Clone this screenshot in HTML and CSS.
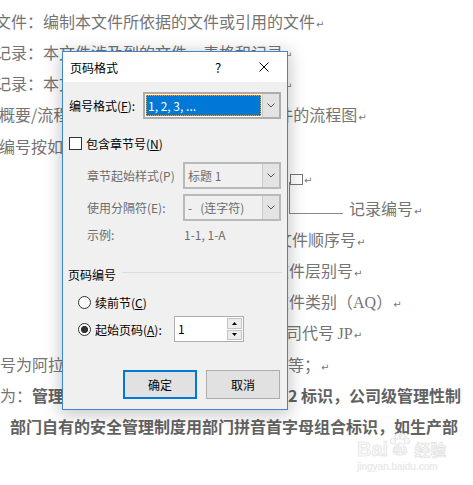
FILE: index.html
```html
<!DOCTYPE html>
<html lang="zh-CN">
<head>
<meta charset="utf-8">
<title>页码格式</title>
<link rel="stylesheet" href="styles.css">
</head>
<body>
<div class="doc">
  <div class="ln s-5">文件：编制本文件所依据的文件或引用的文件<span class="pm">↵</span></div>
  <div class="ln s-5">记录：本文件涉及到的文件、表格和记录<span class="pm">↵</span></div>
  <div class="ln s-5">记录：本文件涉及到的记录、表格和表单<span class="pm">↵</span></div>
  <div class="ln s-1">概要/流程：本文件所描述的各项管理文件的流程图<span class="pm">↵</span></div>
  <div class="ln s-1">编号按如下规定：<span class="pm">↵</span></div>
  <div class="ln i290"><span class="box"></span><span class="pm">↵</span></div>
  <div class="ln i289 diag"><span class="brk"></span><span class="dtx">记录编号<span class="pm">↵</span></span></div>
  <div class="ln i276">文件顺序号<span class="pm">↵</span></div>
  <div class="ln i273">文件层别号<span class="pm">↵</span></div>
  <div class="ln i273">文件类别（<span class="lat">AQ</span>）<span class="pm">↵</span></div>
  <div class="ln i270">公司代号 <span class="lat">JP</span><span class="pm">↵</span></div>
  <div class="ln s0">号为阿拉伯数字，依次为一、二、三、四等；<span class="pm">↵</span></div>
  <div class="ln s0">为：<b>管理性文件用数字１标识，部门级用2 标识，公司级管理性制</b></div>
  <div class="ln i10"><b>部门自有的安全管理制度用部门拼音首字母组合标识，如生产部</b></div>
</div>

<div class="wm">
  <div class="wm-top"><span class="wm-bai">Bai</span><span class="wm-paw"><svg class="paw" width="22" height="24" viewBox="0 0 22 24"><ellipse cx="4" cy="8" rx="2.6" ry="3.2"/><ellipse cx="8.5" cy="3.5" rx="2.6" ry="3"/><ellipse cx="13.5" cy="3.5" rx="2.6" ry="3"/><ellipse cx="18" cy="8" rx="2.6" ry="3.2"/><path d="M4 19 C4 13 8 10 11 10 C14 10 18 13 18 19 C18 23 4 23 4 19 Z"/></svg><span class="wm-du">du</span></span><span class="wm-jy">经验</span></div>
  <div class="wm-url">jingyan.baidu.com</div>
</div>

<div class="dlg">
  <div class="tbar">
    <span class="ttl">页码格式</span>
    <span class="tbtn">?</span>
    <span class="tbtn"><svg width="10" height="10" viewBox="0 0 10 10"><path d="M0.5 0.5 L9.5 9.5 M9.5 0.5 L0.5 9.5" stroke="#000" stroke-width="1" fill="none"/></svg></span>
  </div>
  <div class="dbody">
    <div class="row r1">
      <span class="lbl w74">编号格式(<u>F</u>):</span>
      <div class="combo on w138">
        <div class="cval"><span class="sel">1, 2, 3, ...</span></div>
        <div class="carr"><svg width="8" height="5" viewBox="0 0 8 5"><path d="M0.5 0.5 L4 4 L7.5 0.5" stroke="#555" fill="none"/></svg></div>
      </div>
    </div>
    <div class="row r2">
      <span class="chk"></span><span>包含章节号(<u>N</u>)</span>
    </div>
    <div class="row r3 dis">
      <span class="lbl w96">章节起始样式(P)</span>
      <div class="combo w98">
        <div class="cval"><span class="ctx">标题 1</span></div>
        <div class="carr"><svg width="8" height="5" viewBox="0 0 8 5"><path d="M0.5 0.5 L4 4 L7.5 0.5" stroke="#555" fill="none"/></svg></div>
      </div>
    </div>
    <div class="row r4 dis">
      <span class="lbl w96">使用分隔符(E):</span>
      <div class="combo w98">
        <div class="cval"><span class="ctx">-&nbsp;&nbsp;&nbsp;(连字符)</span></div>
        <div class="carr"><svg width="8" height="5" viewBox="0 0 8 5"><path d="M0.5 0.5 L4 4 L7.5 0.5" stroke="#555" fill="none"/></svg></div>
      </div>
    </div>
    <div class="row r5 dis">
      <span class="lbl w97">示例:</span><span>1-1, 1-A</span>
    </div>
    <div class="row grp">
      <span>页码编号</span><span class="gline"></span>
    </div>
    <div class="row rr1">
      <span class="rad"></span><span>续前节(<u>C</u>)</span>
    </div>
    <div class="row rr2">
      <span class="rad sel-on"></span><span class="rlbl">起始页码(<u>A</u>):</span>
      <div class="spin">
        <span class="sv">1</span>
        <div class="sbtns">
          <span class="sb"><svg width="5" height="3" viewBox="0 0 5 3"><path d="M0 3 L2.5 0 L5 3 Z" fill="#000"/></svg></span>
          <span class="sb"><svg width="5" height="3" viewBox="0 0 5 3"><path d="M0 0 L2.5 3 L5 0 Z" fill="#000"/></svg></span>
        </div>
      </div>
    </div>
    <div class="row btns">
      <span class="btn def">确定</span>
      <span class="btn">取消</span>
    </div>
  </div>
</div>
</body>
</html>
```

FILE: styles.css
```css
html, body {
  margin: 0;
  padding: 0;
  background: #fff;
}
body {
  width: 473px;
  height: 485px;
  overflow: hidden;
  position: relative;
  font-family: "Noto Sans CJK SC", sans-serif;
}

/* background document */
.doc {
  padding-top: 6px;
  color: #747474;
  font-size: 16px;
}
.ln {
  height: 31.15px;
  line-height: 31.15px;
  white-space: nowrap;
}
.ln b {
  font-weight: 700;
  color: #626262;
}
.s-5 { margin-left: -5px; }
.s-1 { margin-left: -1px; }
.s0 { margin-left: 0; }
.i10 { padding-left: 10px; }
.i270 { padding-left: 270px; }
.i273 { padding-left: 273px; }
.i276 { padding-left: 276px; }
.i289 { padding-left: 289px; }
.i290 { padding-left: 290px; }
.pm {
  font-family: "DejaVu Sans", sans-serif;
  font-size: 10px;
  color: #777;
  margin-left: 1px;
}
.lat {
  font-family: "Liberation Serif", serif;
}
.box {
  display: inline-block;
  width: 13px;
  height: 11px;
  box-sizing: border-box;
  border: 1px solid #777;
  vertical-align: -1px;
}
.diag {
  display: flex;
}
.brk {
  flex: none;
  width: 54px;
  height: 32px;
  box-sizing: border-box;
  border-left: 1px solid #888;
  border-bottom: 1px solid #888;
  margin-top: -11px;
}
.dtx {
  margin-left: 6px;
}

/* watermark */
.wm {
  position: absolute;
  left: 357px;
  top: 433px;
  color: #f8f8f8;
  font-family: "Liberation Sans", sans-serif;
}
.wm-top {
  display: flex;
  align-items: flex-end;
  height: 26px;
}
.wm-bai {
  font-size: 20px;
  font-weight: 700;
  line-height: 20px;
  -webkit-text-stroke: 0.6px #dedede;
}
.wm-paw {
  position: relative;
  width: 24px;
  height: 26px;
  display: inline-block;
}
.paw {
  position: absolute;
  left: 1px;
  top: 0;
  fill: #f9f9f9;
  stroke: #dedede;
  stroke-width: 0.8;
}
.wm-du {
  position: absolute;
  left: 5px;
  top: 11px;
  font-size: 10px;
  font-weight: 700;
  -webkit-text-stroke: 0.4px #dcdcdc;
}
.wm-jy {
  font-family: "Noto Sans CJK SC", sans-serif;
  font-size: 16px;
  font-weight: 700;
  line-height: 20px;
  margin-left: 2px;
  -webkit-text-stroke: 0.6px #dedede;
}
.wm-url {
  font-size: 10px;
  line-height: 12px;
  margin-top: 2px;
  color: #ececec;
  -webkit-text-stroke: 0.2px #e0e0e0;
}

/* dialog */
.dlg {
  position: absolute;
  left: 62px;
  top: 51px;
  width: 226px;
  height: 359px;
  box-sizing: border-box;
  border: 1px solid #3c86d4;
  background: #f0f0f0;
  box-shadow: 0 3px 16px 2px rgba(0, 0, 0, 0.22);
  font-size: 12px;
  color: #000;
}
.tbar {
  height: 30px;
  background: #fff;
  display: flex;
  align-items: center;
}
.ttl {
  flex: 1;
  padding-left: 7px;
}
.tbtn {
  width: 46px;
  height: 30px;
  display: flex;
  align-items: center;
  justify-content: center;
  font-size: 13px;
}
.dbody {
  padding: 0 5px 0 6px;
}
.row {
  display: flex;
  align-items: center;
}
u {
  text-decoration: underline;
  text-underline-offset: 1px;
}
.lbl { flex: none; }
.w74 { width: 74px; }
.w96 { width: 96px; }
.w97 { width: 97px; }
.r1 { margin-top: 10px; height: 27px; }
.r2 { margin-top: 14px; height: 20px; }
.r3 { margin-top: 9px; height: 27px; padding-left: 18px; }
.r4 { margin-top: 5px; height: 27px; padding-left: 18px; }
.r5 { margin-top: 5px; height: 16px; padding-left: 18px; }
.grp { margin-top: 24px; height: 16px; margin-left: -1px; }
.rr1 { margin-top: 10px; height: 20px; padding-left: 9px; }
.rr2 { margin-top: 4px; height: 26px; padding-left: 9px; }
.btns {
  margin-top: 28px;
  height: 29px;
  justify-content: flex-end;
  gap: 9px;
  padding-right: 2px;
}
.dis { color: #6d6d6d; }

.combo {
  flex: none;
  height: 27px;
  box-sizing: border-box;
  border: 2px solid #b9b9b9;
  display: flex;
  background: #f0f0f0;
}
.combo.on {
  border-color: #adadad;
  background: #fff;
}
.w138 { width: 138px; }
.w98 { width: 98px; }
.cval {
  flex: 1;
  padding: 1px;
  display: flex;
  align-items: center;
}
.sel {
  flex: 1;
  align-self: stretch;
  background: #0078d7;
  color: #fff;
  padding-left: 2px;
  display: flex;
  align-items: center;
  outline: 1px dotted #f7a13a;
  outline-offset: -1px;
}
.ctx {
  padding-left: 2px;
}
.carr {
  width: 16px;
  border-left: 1px solid #cacaca;
  background: #e3e3e3;
  display: flex;
  align-items: center;
  justify-content: center;
}
.chk {
  width: 13px;
  height: 13px;
  box-sizing: border-box;
  border: 1px solid #333;
  background: #fff;
  margin-right: 4px;
}
.gline {
  flex: 1;
  height: 1px;
  background: #dcdcdc;
  margin-left: 6px;
  margin-bottom: 4px;
}
.rad {
  width: 13px;
  height: 13px;
  box-sizing: border-box;
  border: 1px solid #333;
  border-radius: 50%;
  background: #fff;
  margin-right: 4px;
}
.rad.sel-on {
  background: radial-gradient(circle, #333 0, #333 3.3px, #fff 3.9px);
}
.rlbl {
  width: 79px;
}
.spin {
  width: 70px;
  height: 26px;
  box-sizing: border-box;
  border: 1px solid #acacac;
  background: #fff;
  display: flex;
}
.sv {
  flex: 1;
  padding-left: 3px;
  line-height: 24px;
}
.sbtns {
  width: 15px;
  padding: 1px 1px 1px 0;
  display: flex;
  flex-direction: column;
  gap: 1px;
}
.sb {
  flex: 1;
  box-sizing: border-box;
  border: 1px solid #c4c4c4;
  background: #ececec;
  display: flex;
  align-items: center;
  justify-content: center;
}
.btn {
  width: 74px;
  height: 29px;
  box-sizing: border-box;
  background: #e1e1e1;
  border: 1px solid #adadad;
  display: flex;
  align-items: center;
  justify-content: center;
}
.btn.def {
  border: 2px solid #0078d7;
}
```
